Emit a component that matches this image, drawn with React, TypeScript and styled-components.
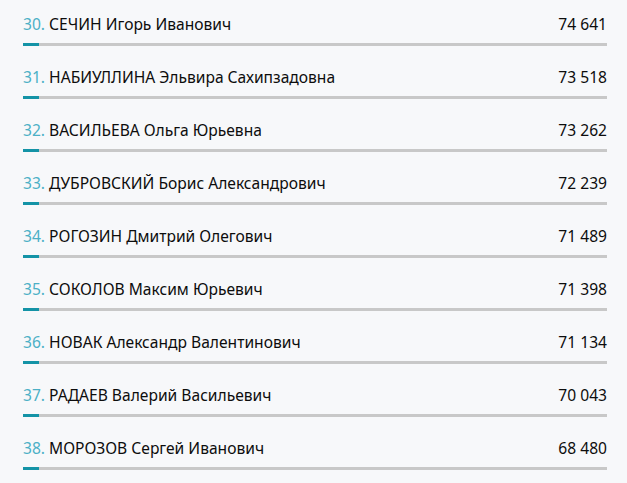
import React from "react";
import styled, { createGlobalStyle } from "styled-components";

const Global = createGlobalStyle`
  html, body { margin: 0; padding: 0; background: #f7f8fa; }
  body { font-family: "Noto Sans", "Open Sans", sans-serif; }
`;

const List = styled.ol`
  list-style: none;
  margin: 0;
  padding: 9px 20px 0 23px;
  display: flex;
  flex-direction: column;
`;

const Row = styled.li`
  height: 53px;
  display: flex;
  flex-direction: column;
`;

const Line = styled.div`
  display: flex;
  align-items: baseline;
  justify-content: space-between;
  height: 34px;
  font-size: 15.6px;
  color: #0d0d0d;
  line-height: 30px;
`;

const Num = styled.span`
  color: #4cb0c6;
`;

const Bar = styled.div`
  height: 3px;
  background: #c8c8c8;
`;

const Fill = styled.div`
  height: 3px;
  width: 16px;
  background: #1493a6;
`;

const Value = styled.span`
  color: #0d0d0d;
`;

const data: [number, string, string][] = [
  [30, "СЕЧИН Игорь Иванович", "74 641"],
  [31, "НАБИУЛЛИНА Эльвира Сахипзадовна", "73 518"],
  [32, "ВАСИЛЬЕВА Ольга Юрьевна", "73 262"],
  [33, "ДУБРОВСКИЙ Борис Александрович", "72 239"],
  [34, "РОГОЗИН Дмитрий Олегович", "71 489"],
  [35, "СОКОЛОВ Максим Юрьевич", "71 398"],
  [36, "НОВАК Александр Валентинович", "71 134"],
  [37, "РАДАЕВ Валерий Васильевич", "70 043"],
  [38, "МОРОЗОВ Сергей Иванович", "68 480"],
];

export default function App() {
  return (
    <>
      <Global />
      <List>
        {data.map(([n, name, v]) => (
          <Row key={n}>
            <Line>
              <span>
                <Num>{n}.</Num> {name}
              </span>
              <Value>{v}</Value>
            </Line>
            <Bar>
              <Fill />
            </Bar>
          </Row>
        ))}
      </List>
    </>
  );
}
